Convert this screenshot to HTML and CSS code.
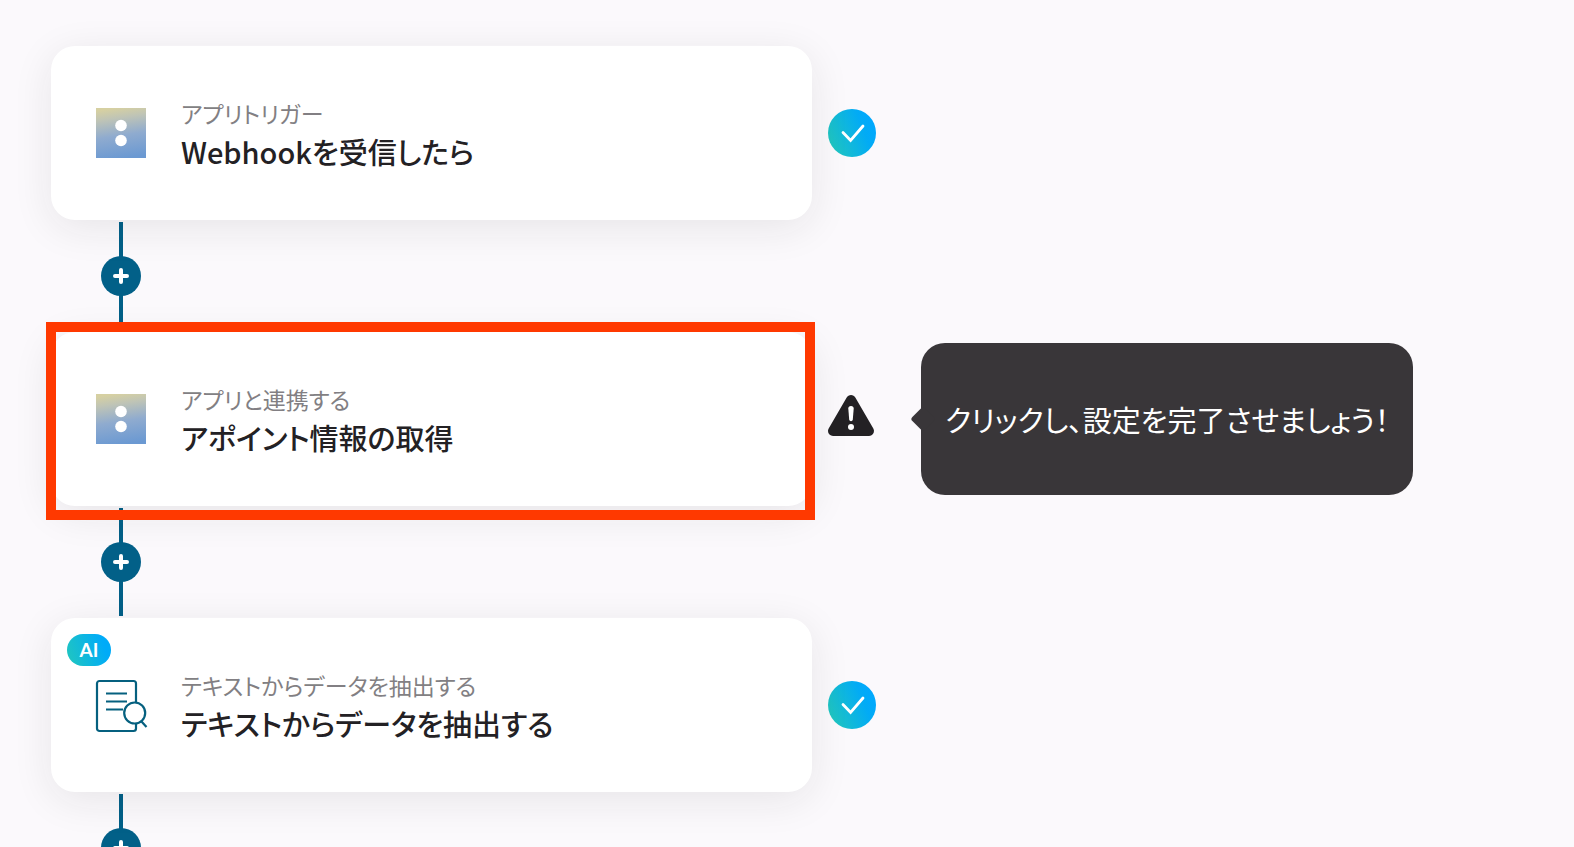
FILE: index.html
```html
<!DOCTYPE html>
<html lang="ja">
<head>
<meta charset="utf-8">
<meta name="viewport" content="width=device-width, initial-scale=1">
<title>フロー</title>
<link rel="stylesheet" href="styles.css">
</head>
<body>

<svg class="defs" width="0" height="0" aria-hidden="true">
    <defs>
        <linearGradient id="grad_app" x1="0.4" y1="0" x2="0.55" y2="1">
            <stop offset="0" stop-color="#d6d0a2"/>
            <stop offset="0.2" stop-color="#bfc4b6"/>
            <stop offset="0.55" stop-color="#8fabcf"/>
            <stop offset="1" stop-color="#6b99d2"/>
        </linearGradient>
        <linearGradient id="grad_check" x1="0" y1="0.75" x2="1" y2="0.35">
            <stop offset="0" stop-color="#22c7bd"/>
            <stop offset="0.75" stop-color="#02abf5"/>
            <stop offset="1" stop-color="#00a8ff"/>
        </linearGradient>
        <symbol id="icon_app" viewBox="0 0 50 50">
            <rect width="50" height="50" fill="url(#grad_app)"/>
            <circle cx="25" cy="17.5" r="5.8" fill="#fff"/>
            <circle cx="25" cy="32.5" r="5.8" fill="#fff"/>
        </symbol>
        <symbol id="icon_check" viewBox="0 0 48 48">
            <circle cx="24" cy="24" r="24" fill="url(#grad_check)"/>
            <path d="M15 23.5l7.6 8L35 17" fill="none" stroke="#fff" stroke-width="2.8" stroke-linecap="round"/>
        </symbol>
        <symbol id="icon_plus" viewBox="0 0 16 16">
            <path d="M8 2v12M2 8h12" stroke="#fff" stroke-width="4" stroke-linecap="round"/>
        </symbol>
    </defs>
</svg>

<main class="flow">
    <div class="step">
        <button class="card" type="button">
            <span class="card_icon"><svg width="50" height="50"><use href="#icon_app"/></svg></span>
            <span class="card_text">
                <span class="card_type">アプリトリガー</span>
                <span class="card_title">Webhookを受信したら</span>
            </span>
        </button>
        <svg class="status" width="48" height="48" role="img" aria-label="完了"><use href="#icon_check"/></svg>
    </div>

    <div class="connector">
        <button class="add" type="button" aria-label="追加"><svg width="16" height="16"><use href="#icon_plus"/></svg></button>
    </div>

    <div class="step">
        <button class="card card_active" type="button">
            <span class="card_icon"><svg width="50" height="50"><use href="#icon_app"/></svg></span>
            <span class="card_text">
                <span class="card_type">アプリと連携する</span>
                <span class="card_title">アポイント情報の取得</span>
            </span>
        </button>
        <svg class="status" width="48" height="48" viewBox="0 0 48 48" role="img" aria-label="未設定">
            <path d="M23 5L41 36H5Z" fill="#232124" stroke="#232124" stroke-width="10" stroke-linejoin="round"/>
            <path d="M20.3 13.5Q20.3 11 23 11T25.7 13.5L24.8 24.5Q24.600 26.2 23 26.2T21.2 24.5Z" fill="#fff"/>
            <circle cx="23" cy="32" r="3" fill="#fff"/>
        </svg>
        <div class="tooltip">クリックし、設定を完了させましょう！</div>
    </div>

    <div class="connector">
        <button class="add" type="button" aria-label="追加"><svg width="16" height="16"><use href="#icon_plus"/></svg></button>
    </div>

    <div class="step">
        <button class="card" type="button">
            <span class="badge">AI</span>
            <span class="card_icon">
                <svg width="52" height="54" viewBox="0 0 52 54" fill="none" stroke="#05607f" stroke-width="2.2">
                    <rect x="1" y="3" width="39" height="50" rx="2.5"/>
                    <path d="M10 15.5h21M10 23.5h21M10 31.5h17"/>
                    <circle cx="38.7" cy="35" r="10.5" fill="#fff"/>
                    <path d="M45.5 43.5L50.5 49"/>
                </svg>
            </span>
            <span class="card_text">
                <span class="card_type">テキストからデータを抽出する</span>
                <span class="card_title">テキストからデータを抽出する</span>
            </span>
        </button>
        <svg class="status" width="48" height="48" role="img" aria-label="完了"><use href="#icon_check"/></svg>
    </div>

    <div class="connector">
        <button class="add" type="button" aria-label="追加"><svg width="16" height="16"><use href="#icon_plus"/></svg></button>
    </div>
</main>

</body>
</html>
```
FILE: styles.css
```css
*,*:after,*:before{
  box-sizing: border-box;
}
body{
  margin: 0;
  height: 100vh;
  overflow: hidden;
  background: #fbf9fc;
  color: #232124;
  font-family: "Noto Sans CJK JP", sans-serif;
  font-feature-settings: "palt";
}
button{
  border: 0;
  padding: 0;
  font: inherit;
  font-feature-settings: inherit;
  color: inherit;
  text-align: left;
  cursor: pointer;
}
svg{
  display: block;
  flex: none;
  overflow: visible;
}
.defs{
  position: absolute;
}

.flow{
  padding: 46px 51px;
}
.step{
  display: flex;
  align-items: center;
}

/* card */
.card{
  position: relative;
  display: flex;
  align-items: center;
  flex: 0 1 761px;
  gap: 33px;
  padding: 49px 45px;
  background: #fff;
  border-radius: 24px;
  box-shadow: 0 8px 40px rgba(35, 33, 36, 0.09);
}
.card_active:after{
  content: "";
  position: absolute;
  inset: -10px -3px -14px -5px;
  border: 10px solid #ff3900;
  z-index: 2;
}
.card_icon{
  flex: none;
  width: 52px;
}
.card_type, .card_title{
  display: block;
}
.card_type{
  font-size: 23px;
  line-height: 36px;
  color: #827f83;
}
.card_title{
  font-size: 29px;
  font-weight: 500;
  line-height: 40px;
}
.badge{
  position: absolute;
  top: 16px;
  left: 16px;
  width: 44px;
  border-radius: 16px;
  background: linear-gradient(70deg, #22c7bd, #00abf8 80%);
  color: #fff;
  font-family: Lato, sans-serif;
  font-size: 19px;
  font-weight: 700;
  line-height: 32px;
  text-align: center;
}

.status{
  margin-left: 16px;
}

/* line between cards */
.connector{
  display: flex;
  align-items: center;
  justify-content: center;
  width: 40px;
  height: 108px;
  margin: 2px 50px;
  background: linear-gradient(#026088, #026088) center / 4px 100% no-repeat;
}
.add{
  display: flex;
  align-items: center;
  justify-content: center;
  width: 40px;
  height: 40px;
  border-radius: 50%;
  background: #026088;
}

/* tooltip */
.tooltip{
  position: relative;
  margin-left: 45px;
  padding: 56px 24px;
  border-radius: 24px;
  background: #393639;
  color: #fff;
  font-size: 29px;
  line-height: 40px;
}
.tooltip:before{
  content: "";
  position: absolute;
  top: 50%;
  left: -7px;
  width: 18px;
  height: 18px;
  margin-top: -9px;
  border-radius: 3px;
  background: #393639;
  transform: rotate(45deg);
}
```
